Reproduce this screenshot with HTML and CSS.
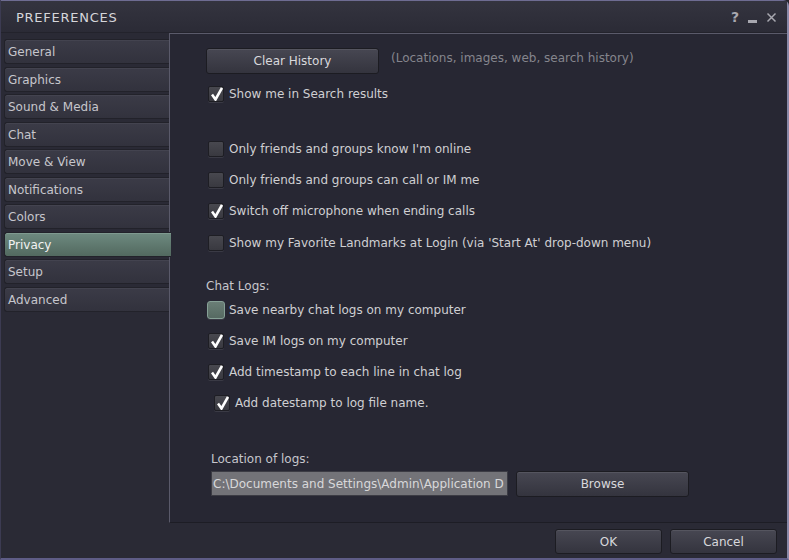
FILE: index.html
```html
<!DOCTYPE html>
<html>
<head>
<meta charset="utf-8">
<link rel="stylesheet" href="styles.css">
</head>
<body>
<div class="window">
  <div class="titlebar">
    <span class="title">PREFERENCES</span>
    <div class="controls">
      <span class="ctl help">?</span>
      <span class="ctl min"></span>
      <svg class="ctl close" width="11" height="11" viewBox="0 0 11 11"><path d="M1.5 1.5 L9.5 9.5 M9.5 1.5 L1.5 9.5" stroke="#a8a8b0" stroke-width="1.5" fill="none"/></svg>
    </div>
  </div>
  <div class="main">
    <div class="tabs">
      <div class="tab">General</div>
      <div class="tab">Graphics</div>
      <div class="tab">Sound &amp; Media</div>
      <div class="tab">Chat</div>
      <div class="tab">Move &amp; View</div>
      <div class="tab">Notifications</div>
      <div class="tab">Colors</div>
      <div class="tab active">Privacy</div>
      <div class="tab">Setup</div>
      <div class="tab">Advanced</div>
    </div>
    <div class="panel">
      <div class="clear-row">
        <div class="btn clear-btn">Clear History</div>
        <span class="hint">(Locations, images, web, search history)</span>
      </div>
      <div class="row r-show"><span class="cb on"></span>Show me in Search results</div>
      <div class="row r-big"><span class="cb"></span>Only friends and groups know I'm online</div>
      <div class="row r-gap"><span class="cb"></span>Only friends and groups can call or IM me</div>
      <div class="row r-gap"><span class="cb on"></span>Switch off microphone when ending calls</div>
      <div class="row r-gap12"><span class="cb"></span>Show my Favorite Landmarks at Login (via 'Start At' drop-down menu)</div>
      <div class="row label r-label">Chat Logs:</div>
      <div class="row r-small"><span class="cb focus"></span>Save nearby chat logs on my computer</div>
      <div class="row r-gap"><span class="cb on"></span>Save IM logs on my computer</div>
      <div class="row r-gap"><span class="cb on"></span>Add timestamp to each line in chat log</div>
      <div class="row r-gap indent"><span class="cb on"></span>Add datestamp to log file name.</div>
      <div class="row label loc-label">Location of logs:</div>
      <div class="loc-row">
        <div class="input">C:\Documents and Settings\Admin\Application D</div>
        <div class="btn browse">Browse</div>
      </div>
    </div>
  </div>
  <div class="footer">
    <div class="btn fbtn">OK</div>
    <div class="btn fbtn">Cancel</div>
  </div>
</div>
</body>
</html>
```
FILE: styles.css
```css
* { box-sizing: border-box; }
html, body {
  margin: 0;
  padding: 0;
  background: #27272f;
}
body {
  width: 789px;
  height: 560px;
  overflow: hidden;
  font-family: "DejaVu Sans", sans-serif;
  font-size: 12px;
  color: #cfcfd2;
}
.window {
  width: 789px;
  height: 560px;
  background: #2a2a35;
  border-top: 1px solid #6e6c92;
  border-right: 2px solid #8a89a8;
  border-bottom: 2px solid #5e5c86;
  border-left: 1px solid #3c3b52;
  border-top-right-radius: 6px;
  display: flex;
  flex-direction: column;
}
.titlebar {
  height: 32px;
  flex: none;
  display: flex;
  align-items: center;
  justify-content: space-between;
  padding: 0 10px 0 15px;
  background: linear-gradient(#34343f, #2b2b36);
  border-bottom: 1px solid #23232c;
}
.title {
  font-size: 13px;
  letter-spacing: 0.75px;
  color: #d6d6da;
  padding-top: 1px;
}
.controls {
  display: flex;
  align-items: center;
  gap: 9px;
  padding-top: 1px;
}
.ctl.help {
  font-weight: bold;
  font-size: 14px;
  color: #a8a8b0;
}
.ctl.min {
  width: 9px;
  height: 3px;
  background: #a8a8b0;
  margin-top: 8px;
}
.main {
  flex: 1;
  display: flex;
  min-height: 0;
}
.tabs {
  width: 168px;
  flex: none;
  padding: 6px 0 0 3px;
  display: flex;
  flex-direction: column;
  gap: 2.5px;
}
.tab {
  height: 25px;
  margin-right: -1px;
  line-height: 25px;
  padding-left: 3px;
  color: #c6c6cc;
  background: linear-gradient(#3b3b47, #32323d);
  border: 1px solid #22222a;
  border-right: none;
  border-radius: 3px 0 0 3px;
  box-shadow: inset 0 1px 0 #43434f;
  font-size: 12px;
}
.tab.active {
  background: linear-gradient(#6e8a80, #52695f);
  color: #f2f2f2;
  box-shadow: inset 0 1px 0 #7f9a90;
  position: relative;
  z-index: 1;
  margin-right: -2px;
}
.panel {
  flex: 1;
  background: #272733;
  border-top: 1px solid #5a5a6a;
  border-left: 1px solid #5a5a6a;
  border-bottom: 1px solid #1d1d25;
  padding-left: 36px;
  display: flex;
  flex-direction: column;
}
.clear-row {
  display: flex;
  align-items: center;
  margin-top: 14px;
  height: 26px;
}
.btn {
  background: linear-gradient(#474752, #34343e);
  border: 1px solid #1c1c22;
  border-radius: 3px;
  box-shadow: inset 0 1px 0 #55555f;
  color: #d8d8dc;
  text-align: center;
  font-size: 12px;
}
.clear-btn {
  width: 173px;
  height: 26px;
  line-height: 24px;
}
.hint {
  margin-left: 12px;
  color: #85858d;
  margin-top: -6px;
}
.row {
  height: 20px;
  display: flex;
  align-items: center;
  padding-left: 2px;
  white-space: nowrap;
}
.cb {
  width: 16px;
  height: 16px;
  flex: none;
  margin-right: 5px;
  background: linear-gradient(#48484f, #393940);
  border: 1px solid #1e1e24;
  border-radius: 2px;
  box-shadow: 0 1px 0 #3a3a45;
  position: relative;
}
.cb.on::after {
  content: "";
  position: absolute;
  left: 2px;
  top: 0px;
  width: 12px;
  height: 14px;
  background: no-repeat center / contain url("data:image/svg+xml;utf8,<svg xmlns='http://www.w3.org/2000/svg' viewBox='0 0 12 14'><path d='M1 7.5 L4.5 12.5 L11 1' stroke='white' stroke-width='2.6' fill='none' stroke-linejoin='miter'/></svg>");
}
.cb.focus {
  width: 18px;
  height: 18px;
  margin-left: -1px;
  margin-right: 4px;
  background: linear-gradient(#6a7e76, #566a62);
  border: 1px solid #86a096;
  border-radius: 3px;
}
.r-show { margin-top: 10px; }
.r-big { margin-top: 35px; }
.r-gap { margin-top: 11px; }
.r-gap12 { margin-top: 12px; }
.r-label { margin-top: 23px; padding-left: 0; color: #c6c6cc; }
.r-small { margin-top: 4px; }
.indent { padding-left: 10px; }
.indent .cb { margin-left: -2px; margin-right: 5px; }
.label { color: #c6c6cc; }
.loc-label { margin-top: 36px; padding-left: 5px; }
.loc-row {
  display: flex;
  margin-top: 2px;
  padding-left: 5px;
  gap: 8px;
}
.input {
  width: 297px;
  height: 25px;
  line-height: 24px;
  background: #737378;
  border: 1px solid #3c3c44;
  color: #d8d8da;
  overflow: hidden;
  white-space: nowrap;
  padding-left: 1px;
}
.browse {
  width: 173px;
  height: 26px;
  line-height: 25px;
}
.footer {
  height: 35px;
  flex: none;
  display: flex;
  justify-content: flex-end;
  align-items: flex-start;
  padding: 6px 10px 0 0;
  gap: 8px;
}
.fbtn {
  width: 107px;
  height: 25px;
  line-height: 24px;
}
```
